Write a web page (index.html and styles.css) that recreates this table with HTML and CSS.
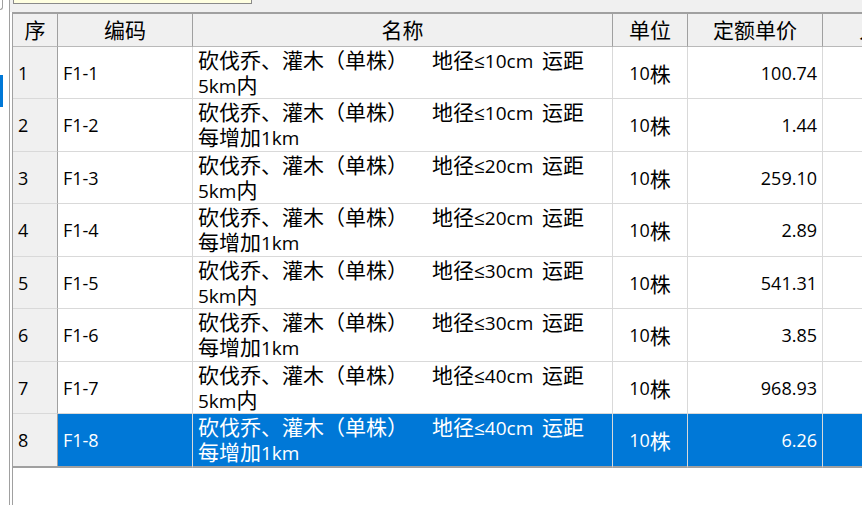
FILE: index.html
```html
<!DOCTYPE html>
<html lang="zh-CN">
<head>
<meta charset="utf-8">
<title>定额</title>
<link rel="stylesheet" href="styles.css">
</head>
<body>
<div class="app">
  <div class="gutter">
    <div class="gutter-box"></div>
    <div class="gutter-mark"></div>
  </div>
  <div class="main">
    <div class="topbar"><div class="tip"></div></div>
    <div class="grid">
      <div class="row head">
        <div class="c c-no">序</div>
        <div class="c c-code">编码</div>
        <div class="c c-name">名称</div>
        <div class="c c-unit">单位</div>
        <div class="c c-price">定额单价</div>
        <div class="c c-x"><span class="x-title">人工费</span></div>
      </div>
      <div class="row r-a">
        <div class="c c-no"><span class="l">1</span></div>
        <div class="c c-code"><span class="l">F1-1</span></div>
        <div class="c c-name"><div class="nm">砍伐乔、灌木（单株）<span class="gap"></span>地径<span class="l">≤10cm</span> 运距<br><span class="l">5km</span>内</div></div>
        <div class="c c-unit"><span class="l">10</span>株</div>
        <div class="c c-price"><span class="l">100.74</span></div>
        <div class="c c-x"></div>
      </div>
      <div class="row r-b">
        <div class="c c-no"><span class="l">2</span></div>
        <div class="c c-code"><span class="l">F1-2</span></div>
        <div class="c c-name"><div class="nm">砍伐乔、灌木（单株）<span class="gap"></span>地径<span class="l">≤10cm</span> 运距<br>每增加<span class="l">1km</span></div></div>
        <div class="c c-unit"><span class="l">10</span>株</div>
        <div class="c c-price"><span class="l">1.44</span></div>
        <div class="c c-x"></div>
      </div>
      <div class="row r-a">
        <div class="c c-no"><span class="l">3</span></div>
        <div class="c c-code"><span class="l">F1-3</span></div>
        <div class="c c-name"><div class="nm">砍伐乔、灌木（单株）<span class="gap"></span>地径<span class="l">≤20cm</span> 运距<br><span class="l">5km</span>内</div></div>
        <div class="c c-unit"><span class="l">10</span>株</div>
        <div class="c c-price"><span class="l">259.10</span></div>
        <div class="c c-x"></div>
      </div>
      <div class="row r-b">
        <div class="c c-no"><span class="l">4</span></div>
        <div class="c c-code"><span class="l">F1-4</span></div>
        <div class="c c-name"><div class="nm">砍伐乔、灌木（单株）<span class="gap"></span>地径<span class="l">≤20cm</span> 运距<br>每增加<span class="l">1km</span></div></div>
        <div class="c c-unit"><span class="l">10</span>株</div>
        <div class="c c-price"><span class="l">2.89</span></div>
        <div class="c c-x"></div>
      </div>
      <div class="row r-a">
        <div class="c c-no"><span class="l">5</span></div>
        <div class="c c-code"><span class="l">F1-5</span></div>
        <div class="c c-name"><div class="nm">砍伐乔、灌木（单株）<span class="gap"></span>地径<span class="l">≤30cm</span> 运距<br><span class="l">5km</span>内</div></div>
        <div class="c c-unit"><span class="l">10</span>株</div>
        <div class="c c-price"><span class="l">541.31</span></div>
        <div class="c c-x"></div>
      </div>
      <div class="row r-b">
        <div class="c c-no"><span class="l">6</span></div>
        <div class="c c-code"><span class="l">F1-6</span></div>
        <div class="c c-name"><div class="nm">砍伐乔、灌木（单株）<span class="gap"></span>地径<span class="l">≤30cm</span> 运距<br>每增加<span class="l">1km</span></div></div>
        <div class="c c-unit"><span class="l">10</span>株</div>
        <div class="c c-price"><span class="l">3.85</span></div>
        <div class="c c-x"></div>
      </div>
      <div class="row r-a">
        <div class="c c-no"><span class="l">7</span></div>
        <div class="c c-code"><span class="l">F1-7</span></div>
        <div class="c c-name"><div class="nm">砍伐乔、灌木（单株）<span class="gap"></span>地径<span class="l">≤40cm</span> 运距<br><span class="l">5km</span>内</div></div>
        <div class="c c-unit"><span class="l">10</span>株</div>
        <div class="c c-price"><span class="l">968.93</span></div>
        <div class="c c-x"></div>
      </div>
      <div class="row r-b sel last">
        <div class="c c-no"><span class="l">8</span></div>
        <div class="c c-code"><span class="l">F1-8</span></div>
        <div class="c c-name"><div class="nm">砍伐乔、灌木（单株）<span class="gap"></span>地径<span class="l">≤40cm</span> 运距<br>每增加<span class="l">1km</span></div></div>
        <div class="c c-unit"><span class="l">10</span>株</div>
        <div class="c c-price"><span class="l">6.26</span></div>
        <div class="c c-x"></div>
      </div>
    </div>
  </div>
</div>
</body>
</html>
```
FILE: styles.css
```css
html, body {
  margin: 0;
  padding: 0;
  background: #ffffff;
}

body {
  font-family: "Noto Sans CJK SC", sans-serif;
  font-size: 21px;
  color: #000;
  overflow: hidden;
}

.app {
  display: flex;
  width: 862px;
  height: 505px;
  overflow: hidden;
}

.gutter {
  flex: none;
  width: 9px;
  border-right: 1px solid #a0a0a0;
  display: flex;
  flex-direction: column;
}

.gutter-box {
  width: 3px;
  height: 10px;
  box-sizing: border-box;
  border-right: 1px solid #a0a0a0;
  border-bottom: 1px solid #a0a0a0;
  border-bottom-right-radius: 3px;
}

.gutter-mark {
  width: 3px;
  height: 32px;
  margin-top: 65px;
  background: #0078d7;
}

.main {
  flex: 1;
  min-width: 0;
  display: flex;
  flex-direction: column;
}

.topbar {
  flex: none;
  height: 12px;
  background: #f0f0f0;
  padding-left: 3px;
}

.tip {
  width: 239px;
  height: 4px;
  box-sizing: border-box;
  background: #ffffe1;
  border: 1px solid #8a8a8a;
  border-top: none;
}

.grid {
  flex: 1;
  margin-left: 2px;
  border-left: 1px solid #a0a0a0;
  border-top: 2px solid #a0a0a0;
  overflow: hidden;
}

.row {
  display: grid;
  grid-template-columns: 45px 135px 420px 75px 135px 150px;
  height: 52px;
}

.row.r-b {
  height: 53px;
}

.row.head {
  height: 33px;
  background: #f0f0f0;
}

.c {
  box-sizing: border-box;
  display: flex;
  align-items: center;
  padding: 0 5px;
  border-right: 1px solid #d9d9d9;
  border-bottom: 1px solid #d9d9d9;
  white-space: nowrap;
  overflow: hidden;
}

.head .c {
  justify-content: center;
  border-right-color: #a0a0a0;
  border-bottom-color: #b9b9b9;
  padding: 0 0 3px;
}

.head .c-x {
  justify-content: flex-start;
}

.x-title {
  margin-left: 36px;
}

.l {
  font-family: "Open Sans", sans-serif;
  font-size: 18px;
}

.c-no {
  background: #f0f0f0;
  border-right-color: #a0a0a0;
}

.c-name .nm {
  line-height: 23px;
  word-spacing: 4px;
}

.c-name .l {
  font-size: 19px;
}

.gap {
  display: inline-block;
  width: 24px;
}

.c-unit {
  justify-content: center;
}

.c-price {
  justify-content: flex-end;
}

.row.sel .c {
  background: #0078d7;
  color: #ffffff;
}

.row.sel .c.c-no {
  background: #f0f0f0;
  color: #000;
}

.row.last {
  height: 54px;
}

.row.last .c {
  border-bottom: 2px solid #a0a0a0;
}
```
